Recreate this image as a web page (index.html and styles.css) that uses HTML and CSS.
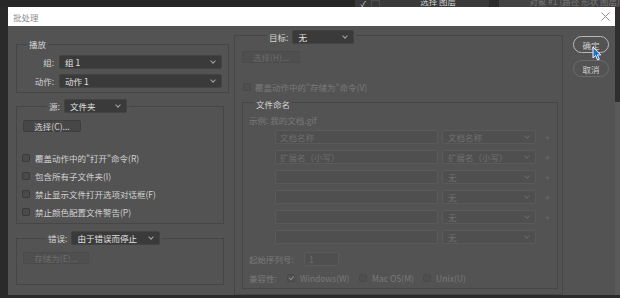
FILE: index.html
```html
<!DOCTYPE html>
<html lang="zh-CN">
<head>
    <meta charset="UTF-8">
    <meta name="viewport" content="width=device-width, initial-scale=1.0">
    <title>批处理</title>
    <link rel="stylesheet" href="styles.css">
</head>
<body>
    <div class="backdrop-top">
        <div class="bt-dark"></div>
        <div class="bt-layers">
            <span class="bt-check">✓</span>
            <span class="bt-box"></span>
            <span class="bt-label"><span>选择 图层</span></span>
        </div>
        <div class="bt-sep"></div>
        <div class="bt-props"><span class="bt-label bt-faint"><span>对象 #1 (路径 形状 图层)</span></span></div>
    </div>

    <div class="stage">
        <div class="stage-side"></div>
        <div class="dialog">
            <div class="titlebar">
                <span class="title">批处理</span>
                <svg class="close" width="9" height="9" viewBox="0 0 9 9"><path d="M0.5 0.5L8.5 8.5M8.5 0.5L0.5 8.5" stroke="#8d8d8d" stroke-width="1" fill="none"/></svg>
            </div>

            <div class="dialog-body">
                <div class="col-left">
                    <fieldset class="group group-play">
                        <legend>播放</legend>
                        <div class="play-body">
                            <div class="field"><span class="field-label">组:</span><div class="select select-play">组 1</div></div>
                            <div class="field"><span class="field-label">动作:</span><div class="select select-play">动作 1</div></div>
                        </div>
                    </fieldset>

                    <fieldset class="group group-source">
                        <legend><div class="legend-row"><span>源:</span><div class="select select-source">文件夹</div></div></legend>
                        <div class="source-body">
                            <div class="btn btn-choose">选择(C)...</div>
                            <ul class="checks">
                                <li><span class="cb"></span>覆盖动作中的"打开"命令(R)</li>
                                <li><span class="cb"></span>包含所有子文件夹(I)</li>
                                <li><span class="cb"></span>禁止显示文件打开选项对话框(F)</li>
                                <li><span class="cb"></span>禁止颜色配置文件警告(P)</li>
                            </ul>
                        </div>
                    </fieldset>

                    <fieldset class="group group-error">
                        <legend><div class="legend-row"><span>错误:</span><div class="select select-error">由于错误而停止</div></div></legend>
                        <div class="error-body">
                            <div class="btn btn-save is-disabled">存储为(E)...</div>
                        </div>
                    </fieldset>
                </div>

                <div class="col-mid">
                    <fieldset class="group group-target">
                        <legend><div class="legend-row"><span>目标:</span><div class="select select-target">无</div></div></legend>
                        <div class="target-body">
                            <div class="btn btn-target is-disabled">选择(H)...</div>
                            <div class="check-row muted"><span class="cb is-disabled"></span>覆盖动作中的"存储为"命令(V)</div>

                            <fieldset class="group group-naming">
                                <legend>文件命名</legend>
                                <div class="naming-body">
                                    <div class="sample muted">示例: 我的文档.gif</div>
                                    <div class="name-rows">
                                        <div class="name-row"><div class="input input-name">文档名称</div><div class="select select-name is-disabled">文档名称</div><span class="plus">+</span></div>
                                        <div class="name-row"><div class="input input-name">扩展名（小写）</div><div class="select select-name is-disabled">扩展名（小写）</div><span class="plus">+</span></div>
                                        <div class="name-row"><div class="input input-name"></div><div class="select select-name is-disabled">无</div><span class="plus">+</span></div>
                                        <div class="name-row"><div class="input input-name"></div><div class="select select-name is-disabled">无</div><span class="plus">+</span></div>
                                        <div class="name-row"><div class="input input-name"></div><div class="select select-name is-disabled">无</div><span class="plus">+</span></div>
                                        <div class="name-row"><div class="input input-name"></div><div class="select select-name is-disabled">无</div></div>
                                    </div>
                                    <div class="serial-row muted"><span class="opt-label">起始序列号:</span><div class="input input-serial">1</div></div>
                                    <div class="compat-row muted">
                                        <span class="opt-label compat-label">兼容性:</span>
                                        <span class="opt opt-win"><span class="cb is-disabled is-checked"></span>Windows(W)</span>
                                        <span class="opt opt-mac"><span class="cb is-disabled"></span>Mac OS(M)</span>
                                        <span class="opt"><span class="cb is-disabled"></span>Unix(U)</span>
                                    </div>
                                </div>
                            </fieldset>
                        </div>
                    </fieldset>
                </div>

                <div class="col-right">
                    <div class="pill pill-primary">确定
                        <svg class="pointer" width="10" height="15" viewBox="0 0 10 15"><path d="M1 1 L1 12 L3.6 9.6 L5.6 14 L7.4 13.2 L5.4 8.9 L8.8 8.9 Z" fill="#1f6fd6" stroke="#ffffff" stroke-width="0.9" stroke-linejoin="round"/></svg>
                    </div>
                    <div class="pill">取消</div>
                </div>
            </div>
        </div>
        <div class="stage-edge"></div>
    </div>
    <div class="backdrop-bottom"></div>
</body>
</html>
```

FILE: styles.css
```css
* {
    margin: 0;
    padding: 0;
    box-sizing: border-box;
}

body {
    width: 620px;
    height: 298px;
    overflow: hidden;
    background: #282828;
    font-family: "Noto Sans CJK SC", "Noto Sans", sans-serif;
    font-size: 8.5px;
    color: #d2d2d2;
}

/* app behind the dialog */
.backdrop-top {
    display: flex;
    height: 7px;
    overflow: hidden;
}

.bt-dark {
    width: 365px;
    background: #272727;
}

.bt-layers {
    width: 138px;
    background: #3a3a3a;
    display: flex;
    color: #cfcfcf;
}

.bt-check {
    width: 16px;
    text-align: center;
    font-size: 8px;
    line-height: 7px;
}

.bt-box {
    width: 9px;
    height: 7px;
    border: 1px solid #4e4e4e;
    border-bottom: 0;
}

.bt-label {
    overflow: hidden;
    margin-left: 40px;
}

.bt-label span {
    display: block;
    margin-top: -5px;
    line-height: 12px;
    white-space: nowrap;
}

.bt-sep {
    width: 10px;
    background: #2b2b2b;
}

.bt-props {
    flex: 1;
    background: #434343;
    display: flex;
}

.bt-faint {
    margin-left: 30px;
    color: #777;
}

.stage {
    display: flex;
    height: 288px;
}

.stage-side {
    width: 8px;
    background: #2a2a2a;
}

.stage-edge {
    flex: 1;
    background: linear-gradient(#2f2f2f 0 95px, #5a5a5a 95px);
}

.backdrop-bottom {
    height: 3px;
    background: #2b2b2b;
}

/* dialog */
.dialog {
    width: 607px;
    background: #535353;
    display: flex;
    flex-direction: column;
}

.titlebar {
    height: 19px;
    flex: none;
    background: #fff;
    color: #8c8c8c;
    display: flex;
    align-items: center;
    justify-content: space-between;
    padding: 0 5px;
}

.dialog-body {
    flex: 1;
    display: flex;
    align-items: flex-start;
    padding-left: 8px;
}

.col-left {
    width: 213px;
    margin-top: 12px;
}

.col-mid {
    width: 329px;
    margin-left: 5px;
}

.col-right {
    width: 36px;
    margin-left: 10px;
    margin-top: 10px;
    display: flex;
    flex-direction: column;
    gap: 7px;
}

.group {
    border: 1px solid #464646;
    padding: 0;
    min-width: 0;
}

.group legend {
    padding: 0 2px;
    line-height: 12px;
}

.legend-row {
    display: flex;
    align-items: center;
    gap: 4px;
}

.muted {
    color: #797979;
}

/* selects, buttons, inputs */
.select {
    height: 14px;
    display: flex;
    align-items: center;
    justify-content: space-between;
    padding: 0 6px 0 5px;
    background: #3a3a3a;
    border: 1px solid #434343;
    border-radius: 2px;
    color: #e2e2e2;
    white-space: nowrap;
}

.select::after {
    content: "";
    width: 3px;
    height: 3px;
    border-right: 1px solid #a5a5a5;
    border-bottom: 1px solid #a5a5a5;
    transform: rotate(45deg);
    margin-top: -2px;
}

.select.is-disabled {
    background: #4f4f4f;
    border-color: #5a5a5a;
    color: #707070;
}

.select.is-disabled::after {
    border-color: #676767;
}

.btn {
    height: 12px;
    display: flex;
    align-items: center;
    justify-content: center;
    background: #474747;
    border: 1px solid #3e3e3e;
    border-radius: 2px;
    color: #d2d2d2;
}

.btn.is-disabled {
    background: #4f4f4f;
    border-color: #4b4b4b;
    color: #6c6c6c;
}

.input {
    height: 14px;
    display: flex;
    align-items: center;
    padding-left: 4px;
    background: #4f4f4f;
    border: 1px solid #5a5a5a;
    border-radius: 1px;
    color: #6d6d6d;
}

.cb {
    width: 8px;
    height: 8px;
    flex: none;
    display: flex;
    align-items: center;
    justify-content: center;
    background: #4a4a4a;
    border: 1px solid #3a3a3a;
    border-radius: 2px;
}

.cb.is-disabled {
    background: #4f4f4f;
    border-color: #494949;
}

.cb.is-checked::after {
    content: "";
    width: 2px;
    height: 4px;
    margin-top: -1px;
    border-right: 1px solid #8a8a8a;
    border-bottom: 1px solid #8a8a8a;
    transform: rotate(45deg);
}

/* play */
.group-play legend {
    margin-left: 10px;
}

.play-body {
    padding: 5px 6px 4px 0;
    display: flex;
    flex-direction: column;
    gap: 5px;
}

.field {
    display: flex;
    align-items: center;
}

.field-label {
    width: 37px;
    margin-right: 5px;
    text-align: right;
}

.select-play {
    width: 163px;
}

/* source */
.group-source {
    width: 208px;
    margin-top: 6px;
}

.group-source legend {
    margin-left: 30px;
}

.select-source {
    width: 63px;
}

.source-body {
    padding: 7px 0 2px 5px;
}

.btn-choose {
    width: 58px;
    margin-left: 1px;
}

.checks {
    list-style: none;
    margin-top: 17px;
}

.checks li {
    height: 18px;
    display: flex;
    align-items: center;
    gap: 5px;
}

/* error */
.group-error {
    width: 208px;
    margin-top: 7px;
}

.group-error legend {
    margin-left: 29px;
}

.select-error {
    width: 89px;
}

.error-body {
    padding: 7px 0 20px 6px;
}

.btn-save {
    width: 66px;
}

/* target */
.group-target legend {
    margin-left: 32px;
    padding-top: 4px;
}

.select-target {
    width: 62px;
}

.target-body {
    padding: 7px 4px 5px 7px;
}

.btn-target {
    width: 58px;
}

.check-row {
    height: 12px;
    margin-top: 18px;
    padding-left: 1px;
    display: flex;
    align-items: center;
    gap: 4px;
}

.group-naming {
    margin-top: 1px;
}

.group-naming legend {
    margin-left: 11px;
}

.naming-body {
    padding: 4px 0 4px 6px;
}

.sample {
    height: 12px;
    line-height: 12px;
}

.name-rows {
    margin-top: 4px;
    padding-left: 26px;
    display: flex;
    flex-direction: column;
    gap: 6px;
}

.name-row {
    display: flex;
    align-items: center;
}

.input-name {
    width: 163px;
}

.select-name {
    width: 94px;
    margin-left: 4px;
}

.plus {
    margin-left: 9px;
    color: #6f6f6f;
}

.serial-row {
    margin-top: 8px;
    display: flex;
    align-items: center;
}

.serial-row .opt-label {
    width: 55px;
}

.input-serial {
    width: 35px;
}

.compat-row {
    height: 12px;
    margin-top: 6px;
    display: flex;
    align-items: center;
}

.compat-label {
    width: 38px;
}

.opt {
    display: flex;
    align-items: center;
    gap: 5px;
}

.opt-win {
    width: 72px;
}

.opt-mac {
    width: 64px;
}

/* right buttons */
.pill {
    height: 17px;
    display: flex;
    align-items: center;
    justify-content: center;
    border: 1px solid #6b6b6b;
    border-radius: 9px;
    color: #cfcfcf;
}

.pill-primary {
    position: relative;
    border-color: #b8b8b8;
}

.pointer {
    position: absolute;
    left: 18px;
    top: 9px;
}
```
